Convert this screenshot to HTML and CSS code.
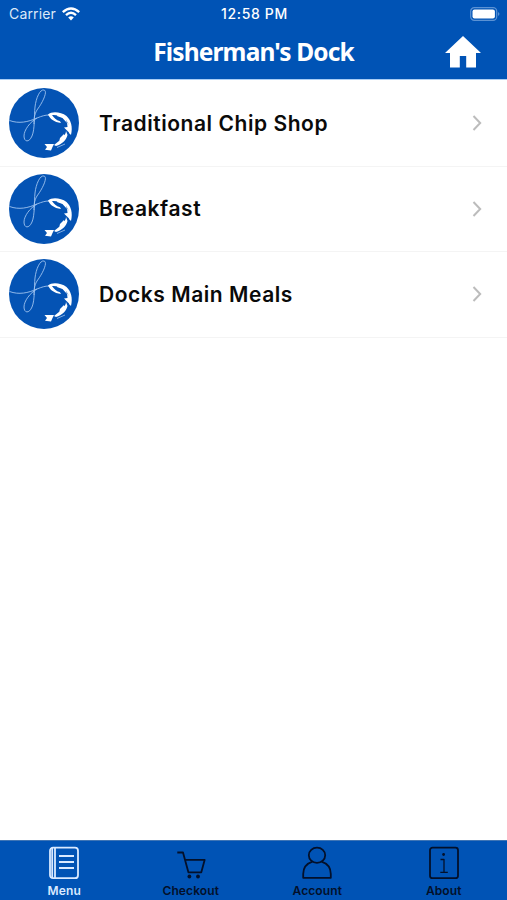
FILE: index.html
```html
<!DOCTYPE html>
<html lang="en">
<head>
  <meta charset="UTF-8" />
  <meta name="viewport" content="width=device-width, initial-scale=1" />
  <title>Fisherman's Dock</title>
  <link rel="stylesheet" href="styles.css">
</head>
<body>

<!-- Shared row artwork -->
<svg class="defs" width="0" height="0" aria-hidden="true">
  <symbol id="fish-logo" viewBox="0 0 70 70">
    <circle cx="35" cy="35" r="35" fill="#0453b4" />
    <path d="M.5 32.5 C10 36 19 34 28 30 C33 28 36 27 40 27 M28 30 C21 34 15 42 15 48 C15 54 20 55 23 48 C26 41 25 28 26 19 C27 10 31 1 35 2 C39 3 34 14 28 22 C25 27 25 32 25 36" fill="none" stroke="#9fc3ee" stroke-width=".9" />
    <path d="M39 26.5 C43 23 52 24 57.5 28 C62 32 64 39 62 47 L60 45 C61 40 60 35 56 31 C51 28 47 26.5 43 27 C45 30 47 32 51 33.2 L52 35 C45 34 41 31 39 26.5 Z" fill="#fff" />
    <path d="M49 25.5 L56 28 L58 35 L53.5 30 L48 28 Z M58 34 L61 38 L61.5 46 L57.5 42 L55 39.5 L58.5 39 Z" fill="#fff" />
    <path d="M57 43 C57 48 51 52 45 57 L47 58 C53 56 57.5 52 58.5 47 Z M55 46 L51 50 L50 54 L56 49 Z" fill="#fff" />
    <path d="M35.5 56 L45 56 L43.5 59 L42 62.5 L36 61.8 L38 59 Z" fill="#fff" />
    <path d="M48 59.5 L56 56" fill="none" stroke="#9fc3ee" stroke-width=".8" />
  </symbol>
  <symbol id="chevron" viewBox="0 0 10 16">
    <path d="M1.5 1 L8.2 8 L1.5 15" fill="none" stroke="#bcbcbc" stroke-width="2" />
  </symbol>
</svg>

<header>
  <div class="status-bar">
    <div class="carrier">
      <span>Carrier</span>
      <svg width="18" height="14" viewBox="0 0 18 14">
        <path d="M.8 5.2 Q9 -2 17.2 5.2 M4 8.1 Q9 3.6 14 8.1" fill="none" stroke="#fff" stroke-width="2.4" />
        <path d="M6.2 10.4 Q9 8.2 11.8 10.4 L9 13.4 Z" fill="#fff" />
      </svg>
    </div>
    <div class="clock">12:58 PM</div>
    <svg class="battery" width="30" height="14" viewBox="0 0 30 14">
      <rect x=".7" y=".7" width="26" height="12.6" rx="3.6" fill="none" stroke="#5b92d4" stroke-width="1.2" />
      <rect x="2.5" y="2.5" width="22.4" height="9" rx="2" fill="#fff" />
      <path d="M28.2 5 Q30.6 7 28.2 9 Z" fill="#6d9fda" />
    </svg>
  </div>
  <div class="title-bar">
    <h1>Fisherman's Dock</h1>
    <a class="home" href="#" aria-label="Home">
      <svg width="36" height="32" viewBox="0 0 36 32">
        <path d="M18 0 L36 17 H31 V31.5 H21.2 V20 H14.8 V31.5 H5 V17 H0 Z" fill="#fff" />
      </svg>
    </a>
  </div>
</header>

<main>
  <a class="category" href="#">
    <svg class="logo"><use href="#fish-logo" /></svg>
    <span class="name">Traditional Chip Shop</span>
    <svg class="arrow"><use href="#chevron" /></svg>
  </a>
  <a class="category" href="#">
    <svg class="logo"><use href="#fish-logo" /></svg>
    <span class="name">Breakfast</span>
    <svg class="arrow"><use href="#chevron" /></svg>
  </a>
  <a class="category" href="#">
    <svg class="logo"><use href="#fish-logo" /></svg>
    <span class="name">Docks Main Meals</span>
    <svg class="arrow"><use href="#chevron" /></svg>
  </a>
</main>

<nav>
  <a class="tab active" href="#">
    <svg viewBox="0 0 32 34">
      <rect x="2" y="1.7" width="28" height="30.5" rx="3" />
      <path d="M4.2 2 V32 M7 2 V32 M11 10 H26 M11 16 H26 M11 22 H26" />
    </svg>
    <span>Menu</span>
  </a>
  <a class="tab" href="#">
    <svg viewBox="0 0 32 34">
      <path d="M2.3 6.5 H8 L13.4 26.3 H26.3 L29.7 13.8 H10" />
      <circle class="solid" cx="14.4" cy="30.5" r="1.9" />
      <circle class="solid" cx="23" cy="30.5" r="1.9" />
    </svg>
    <span>Checkout</span>
  </a>
  <a class="tab" href="#">
    <svg viewBox="0 0 32 34">
      <ellipse cx="16" cy="9.2" rx="8.2" ry="7.6" />
      <path d="M11.5 15.6 C5.5 17.5 2.2 21.5 2.2 28 V31.8 H29.8 V28 C29.8 21.5 26.5 17.5 20.5 15.6" />
    </svg>
    <span>Account</span>
  </a>
  <a class="tab" href="#">
    <svg viewBox="0 0 32 34">
      <rect x="2" y="1.7" width="28" height="30.5" rx="2.5" />
      <path class="thin" d="M12.5 13.5 H16 V26.3 M12.3 26.3 H19.8" />
      <circle class="solid" cx="15.6" cy="8.5" r="1.4" />
    </svg>
    <span>About</span>
  </a>
</nav>

</body>
</html>
```
FILE: styles.css
```css
* {
  box-sizing: border-box;
}

body {
  font-family: Inter, "Liberation Sans", sans-serif;
  background-color: #fff;
  color: #0a0a0a;
  margin: 0;
  height: 100vh;
  display: flex;
  flex-direction: column;
  overflow: hidden;
}

a {
  color: inherit;
  text-decoration: none;
}

.defs {
  position: absolute;
}

/* Header */
header {
  background-color: #0053b5;
  color: #fff;
  height: 80px;
  border-bottom: 1px solid #a9cdf5;
}

.status-bar {
  display: grid;
  grid-template-columns: 1fr auto 1fr;
  align-items: center;
  height: 27px;
  padding: 0 7px 0 9px;
  font-size: 14px;
}

.carrier {
  display: flex;
  align-items: center;
  gap: 6px;
  color: #dce9f8;
  letter-spacing: 0.15px;
}

.clock {
  font-weight: 500;
  letter-spacing: 0.65px;
}

.battery {
  justify-self: end;
}

.title-bar {
  display: grid;
  grid-template-columns: 1fr auto 1fr;
  align-items: center;
  height: 50px;
  padding: 0 26px;
}

h1 {
  grid-column: 2;
  margin: 0;
  font-family: "Noto Sans", sans-serif;
  font-size: 24.5px;
  font-weight: 700;
  line-height: 50px;
  letter-spacing: -0.85px;
}

.home {
  justify-self: end;
  height: 32px;
}

/* Category list */
main {
  flex: 1;
  padding-top: 1px;
}

.category {
  display: flex;
  align-items: center;
  height: 85.5px;
  padding: 0 25px 0 9px;
  border-bottom: 1px solid #f4f4f4;
}

.logo {
  width: 70px;
  height: 70px;
}

.name {
  flex: 1;
  margin-left: 20px;
  font-size: 21px;
  font-weight: 600;
  letter-spacing: 0.55px;
}

.arrow {
  width: 10px;
  height: 16px;
}

/* Tab bar */
nav {
  display: grid;
  grid-template-columns: repeat(4, 1fr);
  height: 60px;
  padding: 5px 0 0 1px;
  background-color: #0053b5;
  border-top: 1px solid #3f75b5;
}

.tab {
  display: flex;
  flex-direction: column;
  align-items: center;
  gap: 3px;
  color: #03102a;
  font-size: 12px;
  font-weight: 600;
  line-height: 16px;
  letter-spacing: 0.1px;
}

.tab.active {
  color: #d9e9ff;
}

.tab svg {
  width: 32px;
  height: 34px;
  fill: none;
  stroke: currentColor;
  stroke-width: 1.8;
  stroke-linejoin: round;
}

.tab .thin {
  stroke-width: 1.3;
}

.tab .solid {
  fill: currentColor;
  stroke: none;
}
```
